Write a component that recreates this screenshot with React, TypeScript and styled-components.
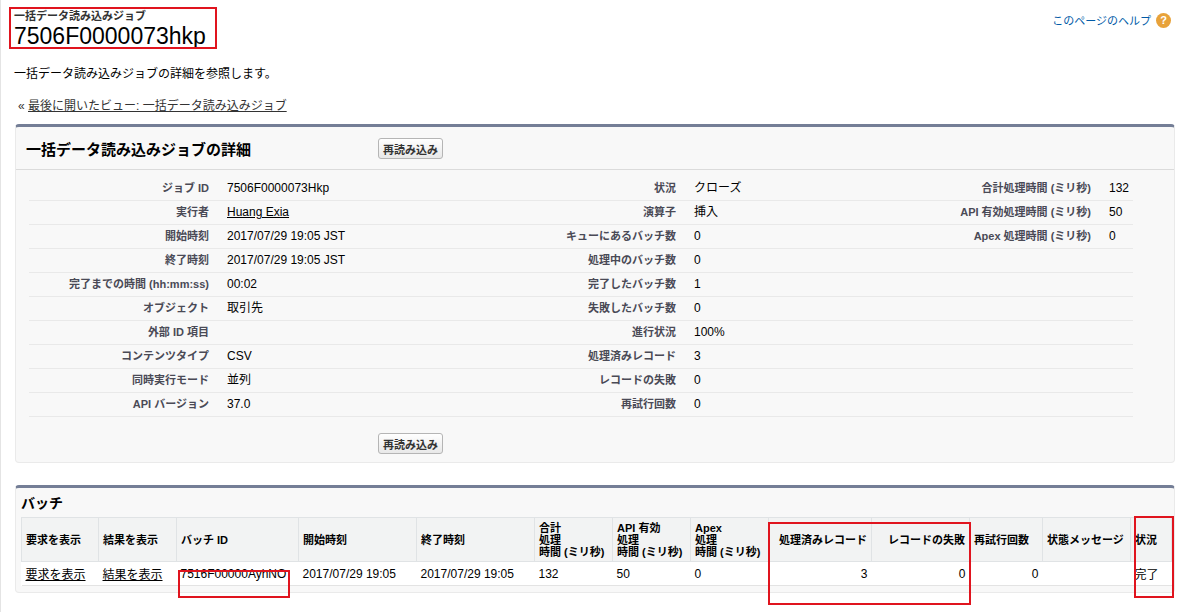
import React from "react";
import styled, { createGlobalStyle } from "styled-components";

const G = createGlobalStyle`
  body { margin:0; background:#fff; font-family: Arial, "Liberation Sans", "Noto Sans CJK JP", sans-serif; font-size:12px; color:#000; }
`;
const Page = styled.div`position:relative; width:1182px; height:612px; overflow:hidden; border-left:1px solid #e4e4e4; box-sizing:border-box; padding:0 7px 0 13px;`;
const TopBar = styled.div`display:flex; justify-content:space-between; align-items:flex-start; padding-top:10px;`;
const TitleBlock = styled.div``;
const SubTitle = styled.div`font-size:11px; color:#333; font-weight:bold; line-height:13px;`;
const Title = styled.div`font-size:23px; line-height:26px; color:#000;`;
const Help = styled.a`display:flex; align-items:center; gap:5px; color:#015ba7; font-size:11px; margin-top:2px; margin-right:4px; text-decoration:none;`;
const HelpIcon = styled.span`width:15px;height:15px;border-radius:50%;background:#e8a23a;color:#fff;font-size:11px;font-weight:bold;display:flex;align-items:center;justify-content:center;`;
const Desc = styled.div`font-size:12px; margin-top:15px;`;
const Crumb = styled.div`font-size:12px; color:#333; margin-top:15px; margin-left:4px; a{color:#333;text-decoration:underline;}`;
const Panel = styled.div<{ mt: number }>`margin-top:${p => p.mt}px; margin-left:1px; background:#f8f8f8; border:1px solid #eaeaea; border-top:3px solid #747e96; border-radius:4px;`;
const PanelHead = styled.div`display:flex; align-items:center; height:42px; border-bottom:1px solid #dbdbdb; padding-left:10px;`;
const PanelTitle = styled.div`font-size:15px; font-weight:bold; color:#000; width:352px;`;
const Btn = styled.button`font-family:inherit; font-size:11px; font-weight:bold; color:#333; background:linear-gradient(#fff,#e8e8e8); border:1px solid #b5b5b5; border-radius:3px; padding:2px 4px; height:21px;`;
const Grid = styled.div`display:grid; grid-template-columns:180px 18px 270px 179px 18px 240px 157px 18px 24px; padding:7px 0 0 13px;`;
const Cell = styled.div<{ label?: boolean }>`height:23px; line-height:23px; border-bottom:1px solid #e9e9e9; white-space:nowrap; font-size:12px;
  ${p => p.label ? "text-align:right; font-weight:bold; font-size:11px; color:#4a4a56;" : "color:#000;"}`;
const Gap = styled.div`height:23px; border-bottom:1px solid #e9e9e9;`;
const Foot = styled.div`display:flex; padding:16px 0 8px 362px;`;
const BatchTitle = styled.div`font-size:14px; font-weight:bold; padding:4px 5px 5px;`;
const Table = styled.table`border-collapse:collapse; table-layout:fixed; margin:0 5px 6px 5px; width:1150px; background:#fff;`;
const Th = styled.th<{ w: number; right?: boolean }>`box-sizing:border-box; width:${p => p.w}px; background:#f2f3f3; border:1px solid #e0e3e5; font-size:11px; font-weight:bold; color:#000; text-align:${p => p.right ? "right" : "left"}; padding:3px 4px; height:44px; line-height:12px; vertical-align:middle; white-space:nowrap;`;
const Td = styled.td<{ right?: boolean }>`border-bottom:1px solid #e3e3e3; padding:3px 4px; height:16px; font-size:12px; white-space:nowrap; text-align:${p => p.right ? "right" : "left"}; a{color:#000;text-decoration:underline;}`;
const Red = styled.div`position:absolute; border:2px solid #e0141e; box-sizing:border-box;`;

const rows: [string, string, string, string, string, string][] = [
  ["ジョブ ID", "7506F0000073Hkp", "状況", "クローズ", "合計処理時間 (ミリ秒)", "132"],
  ["実行者", "@Huang Exia", "演算子", "挿入", "API 有効処理時間 (ミリ秒)", "50"],
  ["開始時刻", "2017/07/29 19:05 JST", "キューにあるバッチ数", "0", "Apex 処理時間 (ミリ秒)", "0"],
  ["終了時刻", "2017/07/29 19:05 JST", "処理中のバッチ数", "0", "", ""],
  ["完了までの時間 (hh:mm:ss)", "00:02", "完了したバッチ数", "1", "", ""],
  ["オブジェクト", "取引先", "失敗したバッチ数", "0", "", ""],
  ["外部 ID 項目", "", "進行状況", "100%", "", ""],
  ["コンテンツタイプ", "CSV", "処理済みレコード", "3", "", ""],
  ["同時実行モード", "並列", "レコードの失敗", "0", "", ""],
  ["API バージョン", "37.0", "再試行回数", "0", "", ""],
];

const V = ({ v }: { v: string }) =>
  v.startsWith("@") ? <Cell><a style={{ color: "#000" }} href="#">{v.slice(1)}</a></Cell> : <Cell>{v}</Cell>;

export default function App() {
  return (
    <Page>
      <G />
      <TopBar>
        <TitleBlock>
          <SubTitle>一括データ読み込みジョブ</SubTitle>
          <Title>7506F0000073hkp</Title>
        </TitleBlock>
        <Help href="#">このページのヘルプ <HelpIcon>?</HelpIcon></Help>
      </TopBar>
      <Desc>一括データ読み込みジョブの詳細を参照します。</Desc>
      <Crumb>« <a href="#">最後に開いたビュー: 一括データ読み込みジョブ</a></Crumb>
      <Panel mt={11}>
        <PanelHead>
          <PanelTitle>一括データ読み込みジョブの詳細</PanelTitle>
          <Btn>再読み込み</Btn>
        </PanelHead>
        <Grid>
          {rows.map((r, i) => (
            <React.Fragment key={i}>
              <Cell label>{r[0]}</Cell><Gap /><V v={r[1]} />
              <Cell label>{r[2]}</Cell><Gap /><Cell>{r[3]}</Cell>
              <Cell label>{r[4]}</Cell><Gap /><Cell>{r[5]}</Cell>
            </React.Fragment>
          ))}
        </Grid>
        <Foot><Btn>再読み込み</Btn></Foot>
      </Panel>
      <Panel mt={22}>
        <BatchTitle>バッチ</BatchTitle>
        <Table>
          <thead>
            <tr>
              <Th w={77}>要求を表示</Th><Th w={78}>結果を表示</Th><Th w={122}>バッチ ID</Th>
              <Th w={118}>開始時刻</Th><Th w={118}>終了時刻</Th>
              <Th w={78}>合計<br />処理<br />時間 (ミリ秒)</Th>
              <Th w={78}>API 有効<br />処理<br />時間 (ミリ秒)</Th>
              <Th w={78}>Apex<br />処理<br />時間 (ミリ秒)</Th>
              <Th w={103} right>処理済みレコード</Th><Th w={98} right>レコードの失敗</Th>
              <Th w={73}>再試行回数</Th><Th w={88}>状態メッセージ</Th><Th w={41}>状況</Th>
            </tr>
          </thead>
          <tbody>
            <tr>
              <Td><a href="#">要求を表示</a></Td><Td><a href="#">結果を表示</a></Td><Td>7516F00000AyhNO</Td>
              <Td>2017/07/29 19:05</Td><Td>2017/07/29 19:05</Td><Td>132</Td><Td>50</Td><Td>0</Td>
              <Td right>3</Td><Td right>0</Td><Td right>0</Td><Td></Td><Td>完了</Td>
            </tr>
          </tbody>
        </Table>
      </Panel>
      <Red style={{ left: 8, top: 7, width: 208, height: 42 }} />
      <Red style={{ left: 177, top: 570, width: 112, height: 28 }} />
      <Red style={{ left: 767, top: 522, width: 203, height: 83 }} />
      <Red style={{ left: 1133, top: 516, width: 40, height: 82 }} />
    </Page>
  );
}
